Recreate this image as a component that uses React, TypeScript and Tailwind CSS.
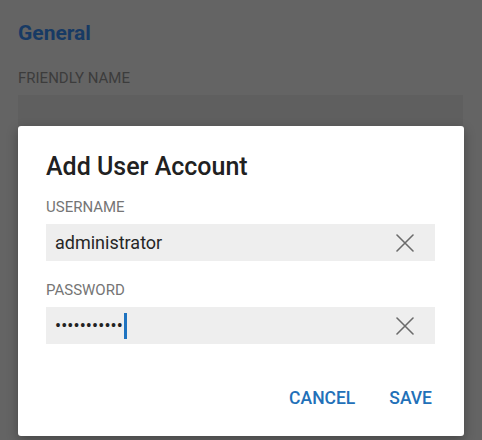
export default function App() {
  return (
    <div className="relative h-[440px] w-[482px] overflow-hidden bg-[#646464] font-['Roboto',sans-serif]">
      {/* Page behind the overlay */}
      <div className="px-[18px] pt-[20px]">
        <h2 className="text-[21px] font-bold leading-[26px] text-[#173a64]">General</h2>
        <p className="mt-[24px] text-[15px] leading-[16px] text-[#3c3c3c]">FRIENDLY NAME</p>
        <div className="mt-[9px] h-[38px] w-[445px] bg-[#5f5f5f]" />
      </div>

      {/* Dialog */}
      <div className="absolute left-[18px] top-[126px] h-[310px] w-[446px] rounded-[3px] bg-white px-[28px] pt-[27px] shadow-[0_4px_12px_rgba(0,0,0,0.3)]">
        <h1 className="text-[25px] font-medium leading-[28px] text-[#212121]">Add User Account</h1>

        <Field label="USERNAME" className="mt-[18px]">
          <span className="text-[18px] text-[#262626]">administrator</span>
        </Field>

        <Field label="PASSWORD" className="mt-[21px]">
          <span className="flex items-center">
            <span className="text-[18px] tracking-[0.1px] text-[#222]">•••••••••••</span>
            <span className="ml-[1px] h-[26px] w-[3px] bg-[#1e73c0]" />
          </span>
        </Field>

        <div className="mt-[36px] flex items-center justify-end gap-[34px] pr-[4px]">
          <button className="h-[36px] text-[17.5px] font-medium text-[#2270b8]">CANCEL</button>
          <button className="h-[36px] text-[17.5px] font-medium text-[#2270b8]">SAVE</button>
        </div>
      </div>
    </div>
  );
}

function ClearIcon() {
  return (
    <svg width="18" height="18" viewBox="0 0 18 18" className="text-[#6b6b6b]">
      <path d="M1 1L17 17M17 1L1 17" stroke="currentColor" strokeWidth="1.6" strokeLinecap="round" />
    </svg>
  );
}

function Field({
  label,
  className,
  children,
}: {
  label: string;
  className?: string;
  children: React.ReactNode;
}) {
  return (
    <div className={className}>
      <p className="text-[15px] leading-[16px] text-[#757575]">{label}</p>
      <div className="mt-[9px] flex h-[37px] w-[389px] items-center justify-between bg-[#eeeeee] pl-[9px] pr-[21px]">
        {children}
        <ClearIcon />
      </div>
    </div>
  );
}
